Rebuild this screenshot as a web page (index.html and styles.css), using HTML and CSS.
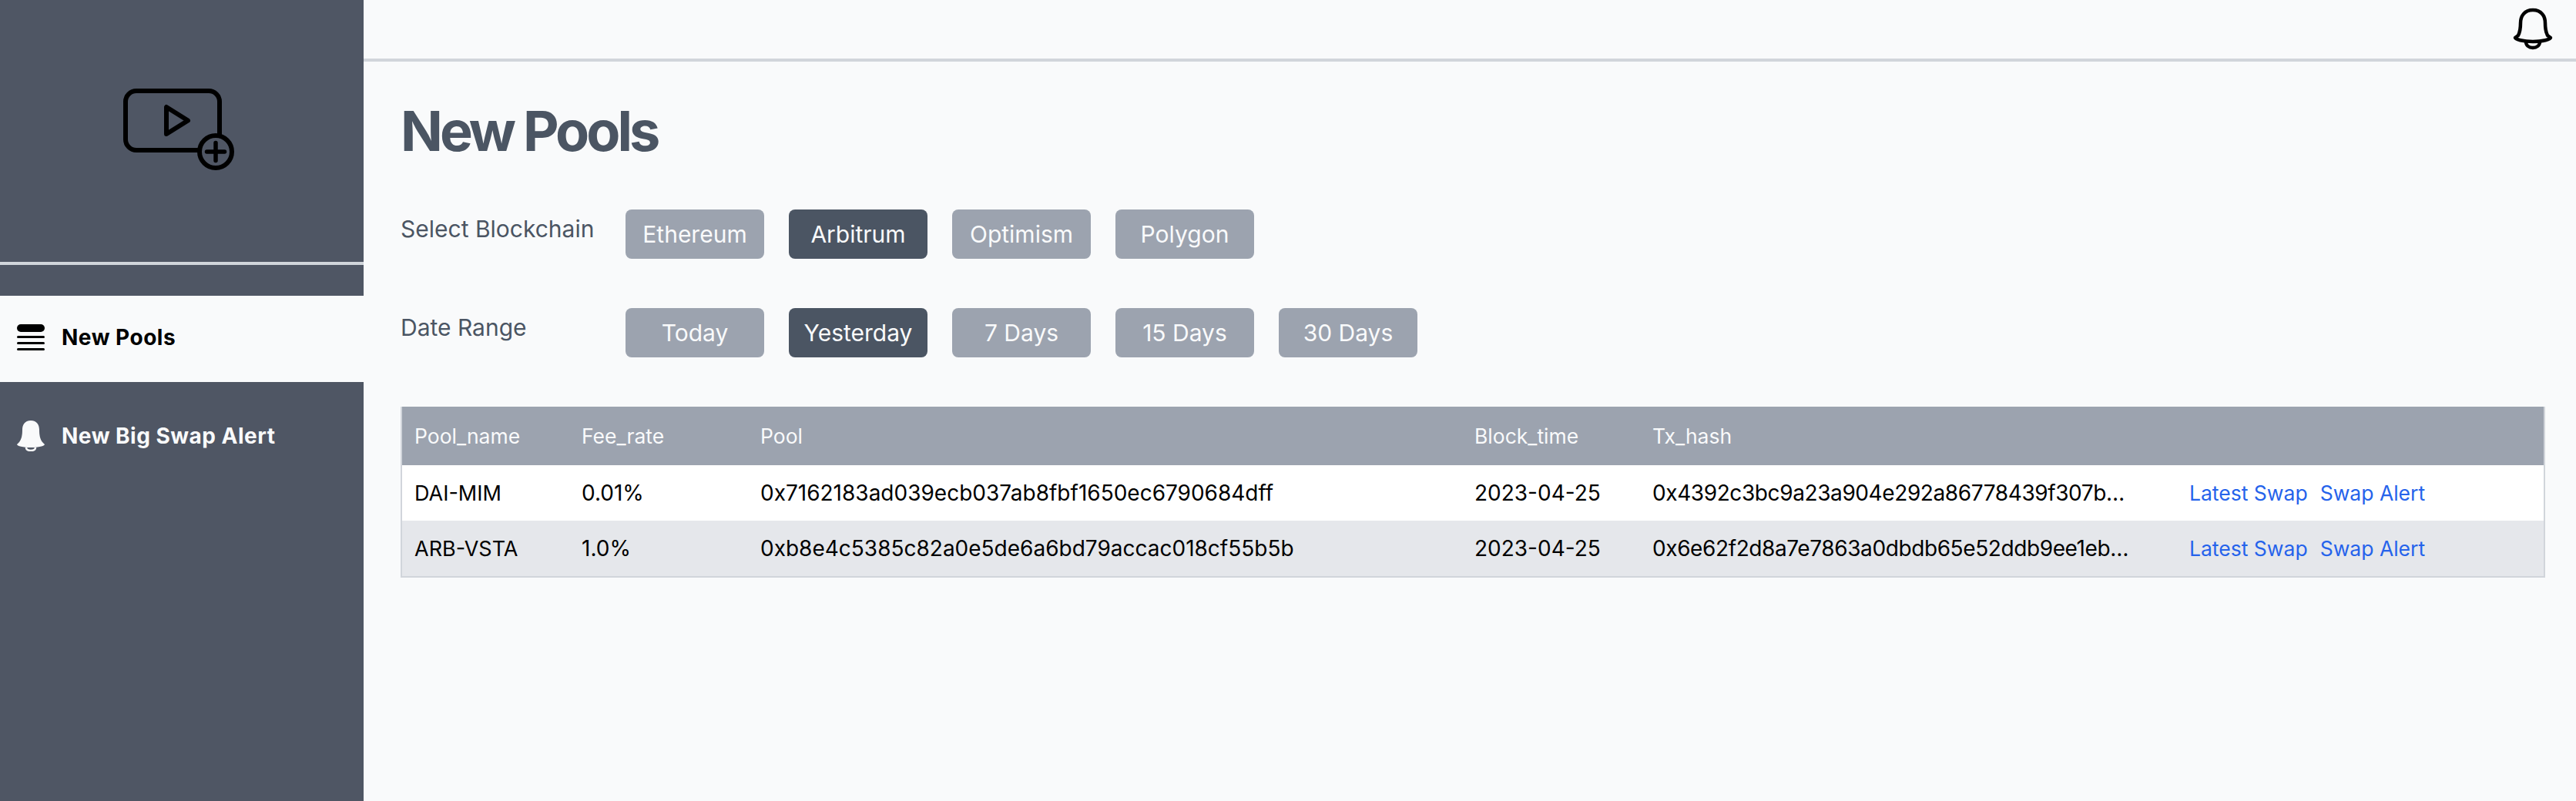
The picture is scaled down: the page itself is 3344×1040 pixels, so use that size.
FILE: index.html
```html
<!DOCTYPE html>
<html lang="en">
<head>
  <meta charset="UTF-8">
  <title>New Pools</title>
  <link rel="stylesheet" href="styles.css">
</head>
<body>
  <aside class="sidebar">
    <div class="logo">
      <svg width="160" height="120" viewBox="0 0 160 120" fill="none" stroke="#000" stroke-width="6" stroke-linecap="round" stroke-linejoin="round">
        <path d="M129 70V26a14 14 0 0 0-14-14H21A14 14 0 0 0 7 26v49a14 14 0 0 0 14 14h82"/>
        <path d="M60 33v35l28-17.5z"/>
        <circle cx="124" cy="91" r="21"/>
        <path d="M124 79.500v23M112.500 91h23" stroke-width="5.500"/>
      </svg>
    </div>
    <nav class="nav">
      <a class="nav-item active" href="#">
        <svg class="nav-icon" width="36" height="36" viewBox="0 0 36 36" fill="#000">
          <rect x="0" y="1" width="36" height="10" rx="5"/>
          <rect x="0" y="16" width="36" height="3" rx="1.500"/>
          <rect x="0" y="24" width="36" height="3" rx="1.500"/>
          <rect x="0" y="32" width="36" height="3" rx="1.500"/>
        </svg>
        New Pools
      </a>
      <a class="nav-item" href="#">
        <svg class="nav-icon" width="36" height="40" viewBox="0 0 36 40" fill="#f9fafb">
          <path d="M18 0C10 0 7 6 7 12c0 7-1 12-4 16l-3 3c0 2 8 4 18 4s18-2 18-4l-3-3c-3-4-4-9-4-16C29 6 26 0 18 0z"/>
          <path d="M12 35c0 3 3 4 6 4s6-1 6-4" fill="none" stroke="#f9fafb" stroke-width="2.500"/>
        </svg>
        New Big Swap Alert
      </a>
    </nav>
  </aside>

  <div class="content">
    <header class="topbar">
      <svg width="52" height="56" viewBox="0 0 52 56" fill="none" stroke="#000" stroke-width="4.500" stroke-linejoin="round" stroke-linecap="round">
        <path d="M26 3C15 3 10 11 10 20c0 8-1 12-3 16l-4 3c0 2 10 5 23 5s23-3 23-5l-4-3c-2-4-3-8-3-16C42 11 37 3 26 3z"/>
        <path d="M17 44c0 5 4 8 9 8s9-3 9-8"/>
      </svg>
    </header>

    <main class="main">
      <h1 class="title">New Pools</h1>

      <div class="filter">
        <span class="filter-label">Select Blockchain</span>
        <div class="filter-btns">
          <button class="btn">Ethereum</button>
          <button class="btn selected">Arbitrum</button>
          <button class="btn">Optimism</button>
          <button class="btn">Polygon</button>
        </div>
      </div>

      <div class="filter">
        <span class="filter-label">Date Range</span>
        <div class="filter-btns">
          <button class="btn">Today</button>
          <button class="btn selected">Yesterday</button>
          <button class="btn">7 Days</button>
          <button class="btn">15 Days</button>
          <button class="btn">30 Days</button>
        </div>
      </div>

      <table class="pools">
        <colgroup>
          <col class="col-name"><col class="col-fee"><col class="col-pool"><col class="col-time"><col class="col-hash"><col>
        </colgroup>
        <thead>
          <tr><th>Pool_name</th><th>Fee_rate</th><th>Pool</th><th>Block_time</th><th>Tx_hash</th><th></th></tr>
        </thead>
        <tbody>
          <tr>
            <td class="name">DAI-MIM</td>
            <td>0.01%</td>
            <td class="addr">0x7162183ad039ecb037ab8fbf1650ec6790684dff</td>
            <td>2023-04-25</td>
            <td class="hash">0x4392c3bc9a23a904e292a86778439f307b…</td>
            <td class="links"><a href="#">Latest Swap</a><a href="#">Swap Alert</a></td>
          </tr>
          <tr>
            <td class="name">ARB-VSTA</td>
            <td>1.0%</td>
            <td class="addr">0xb8e4c5385c82a0e5de6a6bd79accac018cf55b5b</td>
            <td>2023-04-25</td>
            <td class="hash">0x6e62f2d8a7e7863a0dbdb65e52ddb9ee1eb…</td>
            <td class="links"><a href="#">Latest Swap</a><a href="#">Swap Alert</a></td>
          </tr>
        </tbody>
      </table>
    </main>
  </div>
</body>
</html>
```

FILE: styles.css
```css
* { margin: 0; padding: 0; box-sizing: border-box; font-family: 'Inter', sans-serif; }
html, body { height: 100%; }
body { display: flex; background-color: #f9fafb; overflow: hidden; }

.sidebar { width: 472px; flex-shrink: 0; background-color: #4f5664; }
.logo { height: 344px; padding: 106px 0 0 156px; border-bottom: 4px solid #d1d5db; }
.logo svg { display: block; }
.nav { display: flex; flex-direction: column; gap: 16px; margin-top: 40px; }
.nav-item {
  display: flex; align-items: center; gap: 22px;
  height: 112px; padding: 0 0 4px 22px;
  color: #f9fafb; font-size: 28px; font-weight: 700; letter-spacing: 0.5px; text-decoration: none;
}
.nav-item.active { background-color: #f9fafb; color: #000; }

.content { flex: 1; min-width: 0; }
.topbar {
  display: flex; justify-content: flex-end; align-items: flex-start;
  height: 80px; padding: 10px 30px 0 0;
  border-bottom: 4px solid #d1d5db;
}
.main { padding: 50px 40px 0 48px; }
.title { font-size: 72px; font-weight: 700; line-height: 80px; letter-spacing: -4px; color: #4b5563; margin-bottom: 62px; }

.filter { display: flex; height: 64px; margin-bottom: 64px; }
.filter-label { width: 292px; font-size: 30px; line-height: 50px; color: #4b5563; }
.filter-btns { display: flex; gap: 32px; }
.btn {
  width: 180px; height: 64px;
  background-color: #9ca3af; color: #f9fafb;
  border: none; border-radius: 8px;
  font-size: 30px; cursor: pointer;
}
.btn.selected { background-color: #4b5563; }

.pools { width: 100%; table-layout: fixed; border-collapse: separate; border-spacing: 0; border: 2px solid #d1d5db; border-top: none; font-size: 28px; }
.pools th { height: 76px; background-color: #9ca3af; color: #f9fafb; font-size: 26.5px; font-weight: 400; text-align: left; padding: 0 16px; }
.pools td { height: 72px; padding: 0 16px; color: #000; background-color: #fff; white-space: nowrap; }
.pools td.name { font-size: 27px; }
.pools tbody tr:nth-child(even) td { background-color: #e5e7eb; }
.col-name { width: 217px; }
.col-fee { width: 232px; }
.col-pool { width: 927px; }
.col-time { width: 231px; }
.col-hash { width: 697px; }
.hash { letter-spacing: -0.4px; }
.links a { color: #2563eb; font-size: 26.5px; text-decoration: none; margin-right: 16px; }
```
